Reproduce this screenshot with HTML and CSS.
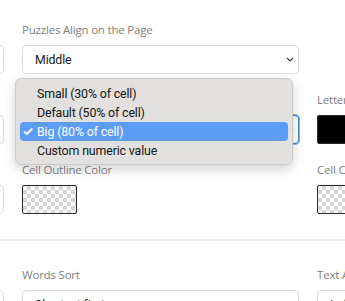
FILE: index.html
```html
<!DOCTYPE html>
<html>
<head>
<meta charset="utf-8">
<link rel="stylesheet" href="styles.css">
</head>
<body>
<div class="page">
  <div class="grid">
    <div class="field">
      <div class="label">Puzzles Per Page</div>
      <div class="select"><span>Two</span><svg class="chev" viewBox="0 0 8 5"><path d="M1 1l3 3 3-3"/></svg></div>
    </div>
    <div class="field">
      <div class="label">Puzzles Align on the Page</div>
      <div class="select"><span>Middle</span><svg class="chev" viewBox="0 0 8 5"><path d="M1 1l3 3 3-3"/></svg></div>
    </div>
    <div class="field"></div>

    <div class="field">
      <div class="label">Letters Font</div>
      <div class="select"><span>Arial</span><svg class="chev" viewBox="0 0 8 5"><path d="M1 1l3 3 3-3"/></svg></div>
    </div>
    <div class="field menu-anchor">
      <div class="label">Letters Size</div>
      <div class="select focus"><span>Big (80% of cell)</span><svg class="chev" viewBox="0 0 8 5"><path d="M1 1l3 3 3-3"/></svg></div>
      <ul class="menu">
        <li class="item">Small (30% of cell)</li>
        <li class="item">Default (50% of cell)</li>
        <li class="item selected"><span class="check">✓</span>Big (80% of cell)</li>
        <li class="item">Custom numeric value</li>
      </ul>
    </div>
    <div class="field">
      <div class="label">Letters Color</div>
      <div class="swatch black"></div>
    </div>

    <div class="field">
      <div class="label">Cell Shape</div>
      <div class="select"><span>Square</span><svg class="chev" viewBox="0 0 8 5"><path d="M1 1l3 3 3-3"/></svg></div>
    </div>
    <div class="field">
      <div class="label">Cell Outline Color</div>
      <div class="swatch checker"></div>
    </div>
    <div class="field">
      <div class="label">Cell Color</div>
      <div class="swatch checker"></div>
    </div>
  </div>

  <div class="divider"></div>

  <div class="grid second">
    <div class="field">
      <div class="label">Words Case</div>
      <div class="select"><span>Uppercase</span><svg class="chev" viewBox="0 0 8 5"><path d="M1 1l3 3 3-3"/></svg></div>
    </div>
    <div class="field">
      <div class="label">Words Sort</div>
      <div class="select"><span>Shortest first</span><svg class="chev" viewBox="0 0 8 5"><path d="M1 1l3 3 3-3"/></svg></div>
    </div>
    <div class="field">
      <div class="label">Text Align</div>
      <div class="select"><span>Left</span><svg class="chev" viewBox="0 0 8 5"><path d="M1 1l3 3 3-3"/></svg></div>
    </div>
  </div>
</div>
</body>
</html>
```

FILE: styles.css
```css
html, body {
  margin: 0;
  padding: 0;
  background: #ffffff;
  overflow: hidden;
}

.page {
  width: 345px;
  height: 301px;
  overflow: hidden;
  position: relative;
}

.grid {
  display: grid;
  grid-template-columns: 277px 277px 277px;
  column-gap: 18px;
  row-gap: 18px;
  margin-left: -273px;
  padding-top: 22px;
}

.grid.second {
  padding-top: 26px;
}

.field {
  display: flex;
  flex-direction: column;
}

.label {
  font-family: "Open Sans", "Lato", sans-serif;
  font-size: 11.5px;
  letter-spacing: -0.2px;
  line-height: 16px;
  height: 16px;
  color: #808080;
  margin-bottom: 7px;
  white-space: nowrap;
}

.select {
  box-sizing: border-box;
  height: 29px;
  border: 1px solid #dcdcdc;
  border-radius: 4px;
  background: #fff;
  display: flex;
  align-items: center;
  justify-content: space-between;
  padding: 0 3px 0 12px;
  font-family: "Roboto", "Inter", sans-serif;
  font-size: 12.3px;
  letter-spacing: -0.1px;
  color: #1a1a1a;
}

.select.focus {
  border: 1px solid #3f86c9;
  box-shadow: 0 0 0 1px #7db6ea;
}

.chev {
  width: 8px;
  height: 5px;
  margin-right: 1px;
}

.chev path {
  fill: none;
  stroke: #333;
  stroke-width: 1.1;
}

.swatch {
  box-sizing: border-box;
  width: 55px;
  height: 29px;
  border: 1.5px solid #2a2a2a;
  border-radius: 2px;
}

.swatch.black {
  background: #000;
}

.swatch.checker {
  background-color: #ffffff;
  background-image:
    linear-gradient(45deg, #d6d6d6 25%, transparent 25%, transparent 75%, #d6d6d6 75%),
    linear-gradient(45deg, #d6d6d6 25%, transparent 25%, transparent 75%, #d6d6d6 75%);
  background-size: 8px 8px;
  background-position: 0 0, 4px 4px;
}

.divider {
  height: 2px;
  background: #ececec;
  margin-top: 25px;
}

.menu-anchor {
  position: relative;
}

.menu {
  position: absolute;
  left: -7px;
  top: -14px;
  width: 278px;
  box-sizing: border-box;
  margin: 0;
  padding: 5px 4px 4px 4px;
  list-style: none;
  background: rgba(226, 224, 222, 0.98);
  border: 1px solid #cdcbc9;
  border-radius: 6px;
  box-shadow: 0 4px 12px rgba(0, 0, 0, 0.18);
  font-family: "Roboto", "Inter", sans-serif;
  font-size: 12.4px;
  letter-spacing: -0.15px;
  color: #151515;
  z-index: 2;
}

.item {
  position: relative;
  height: 19px;
  line-height: 19px;
  padding-left: 17px;
  border-radius: 4px;
  white-space: nowrap;
}

.item.selected {
  background: #5a9cf6;
  color: #fff;
}

.check {
  position: absolute;
  left: 2px;
  top: 0;
  font-size: 13px;
  font-weight: bold;
}
```
